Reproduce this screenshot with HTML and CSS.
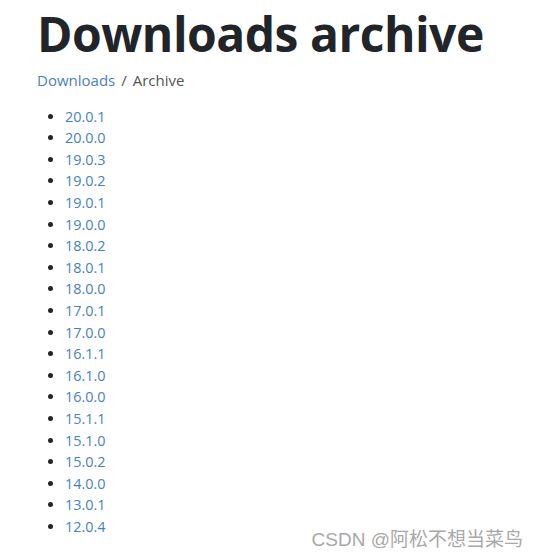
FILE: index.html
```html
<!DOCTYPE html>
<html lang="en">
<head>
    <meta charset="UTF-8">
    <meta name="viewport" content="width=device-width, initial-scale=1.0">
    <title>Downloads archive</title>
    <link rel="stylesheet" href="styles.css">
</head>
<body>

<div class="page">
    <h1 class="title">Downloads archive</h1>
    <nav class="breadcrumb">
        <a href="#">Downloads</a>
        <span class="sep">/</span>
        <span class="current">Archive</span>
    </nav>

    <ul class="releases">
        <li><a href="#">20.0.1</a></li>
        <li><a href="#">20.0.0</a></li>
        <li><a href="#">19.0.3</a></li>
        <li><a href="#">19.0.2</a></li>
        <li><a href="#">19.0.1</a></li>
        <li><a href="#">19.0.0</a></li>
        <li><a href="#">18.0.2</a></li>
        <li><a href="#">18.0.1</a></li>
        <li><a href="#">18.0.0</a></li>
        <li><a href="#">17.0.1</a></li>
        <li><a href="#">17.0.0</a></li>
        <li><a href="#">16.1.1</a></li>
        <li><a href="#">16.1.0</a></li>
        <li><a href="#">16.0.0</a></li>
        <li><a href="#">15.1.1</a></li>
        <li><a href="#">15.1.0</a></li>
        <li><a href="#">15.0.2</a></li>
        <li><a href="#">14.0.0</a></li>
        <li><a href="#">13.0.1</a></li>
        <li><a href="#">12.0.4</a></li>
    </ul>
</div>

<div class="watermark">CSDN @阿松不想当菜鸟</div>

</body>
</html>
```

FILE: styles.css
```css
body {
    font-family: 'Open Sans', 'Noto Sans', sans-serif;
    margin: 0;
    background-color: #fff;
    color: #212529;
}
.page {
    padding: 0 0 0 37px;
}
.title {
    margin: 0;
    padding-top: 5px;
    font-size: 48px;
    font-weight: 700;
    line-height: 1.2;
    letter-spacing: -0.5px;
}
.breadcrumb {
    display: flex;
    gap: 6px;
    margin-top: 6px;
    font-size: 15px;
    line-height: 22px;
}
.breadcrumb a {
    color: #4a80c4;
    text-decoration: none;
}
.breadcrumb .sep,
.breadcrumb .current {
    color: #555;
}
.releases {
    margin: 15px 0 0;
    padding-left: 28px;
    font-size: 14.4px;
    line-height: 21.6px;
}
.releases a {
    color: #4a80c4;
    text-decoration: none;
}
/* site watermark in the bottom corner */
.watermark {
    position: absolute;
    right: 16px;
    bottom: 7px;
    font-family: 'Liberation Sans', 'Noto Sans CJK SC', sans-serif;
    font-size: 19px;
    color: #a8a8a8;
}
```
